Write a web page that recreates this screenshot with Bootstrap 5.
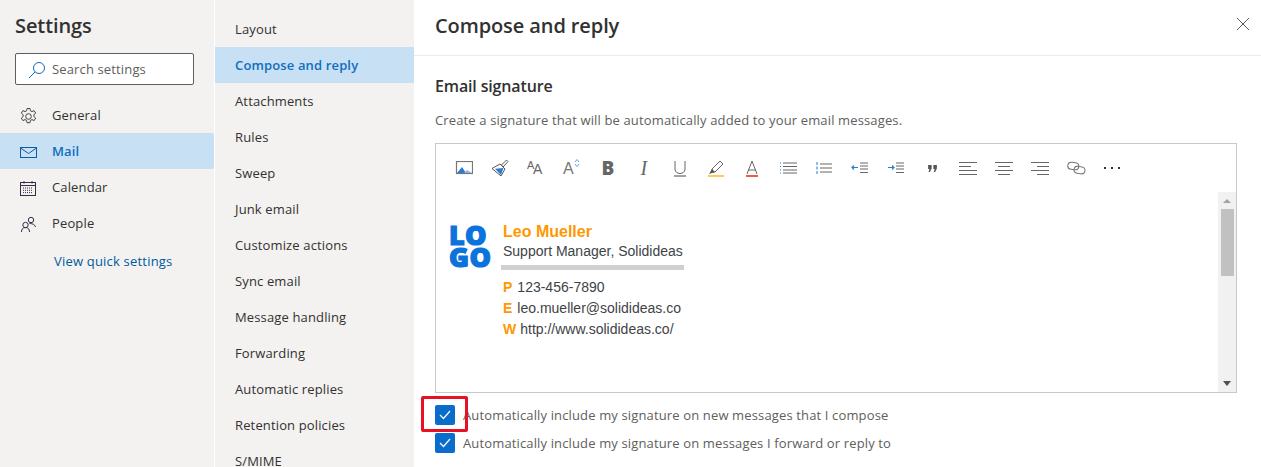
<!DOCTYPE html>
<html>
<head>
  <title>Settings</title>
  <link rel="stylesheet" href="https://cdn.jsdelivr.net/npm/bootstrap@5.3.0/dist/css/bootstrap.min.css">
  <style>
    html, body { height: 467px; overflow: hidden; }
    body { font-family: "Open Sans", "Noto Sans", sans-serif; font-size: 13px; letter-spacing: .14px; color: #323130; background: #fff; position: relative; }
    .shell { height: 467px; }
    .side-main { width: 214px; background: #f3f2f1; flex: none; }
    .side-sub { width: 199px; margin-left: 1px; background: #f3f2f1; flex: none; padding-top: 11px; overflow: hidden; }
    .set-title { font-size: 20px; font-weight: 600; line-height: 26px; padding: 13px 0 0 15px; letter-spacing: -.1px; }
    .search-box { width: 179px; height: 32px; margin: 14px 0 12px 15px; background: #fff; border: 1px solid #605e5c; border-radius: 2px; color: #605e5c; padding: 2px 0 0 11px; gap: 5px; }
    .nav-row { height: 36px; padding: 2px 0 0 19px; gap: 14px; }
    .nav-row.on { background: #c7e0f4; color: #106ebe; font-weight: 600; border-radius: 0 2px 2px 0; }
    .quick-link { color: #005a9e; padding: 10px 0 0 54px; line-height: 20px; letter-spacing: .2px; }
    .sub-row { height: 36px; padding: 2px 0 0 20px; }
    .sub-row.on { background: #c7e0f4; color: #106ebe; font-weight: 600; }
    .pane { min-width: 0; }
    .pane-head { height: 56px; border-bottom: 1px solid #edebe9; padding: 0 11px 4px 21px; }
    .pane-title { font-size: 20px; font-weight: 600; letter-spacing: -.1px; margin: 0; color: #323130; }
    .pane-body { padding: 20px 24px 0 21px; }
    .sec-title { font-size: 16px; font-weight: 600; line-height: 21px; margin: 0; letter-spacing: -.15px; }
    .sec-note { color: #605e5c; line-height: 18px; margin: 14px 0 14px; }
    .editor-box { height: 250px; width: 802px; border: 1px solid #c8c8c8; }
    .tool-row { height: 48px; padding-left: 10px; }
    .tool-btn { width: 36px; height: 48px; flex: none; }
    .edit-area { height: 200px; }
    .edit-scroll { width: 18px; background: #f1f1f1; flex: none; }
    .scroll-thumb { height: 67px; width: 13px; background: #c1c1c1; margin: 0 auto; }
    .scroll-end { height: 17px; }
    .sig-wrap { padding: 29px 0 0 13px; gap: 11px; letter-spacing: 0; }
    .logo-mark { font-weight: 800; font-size: 27px; line-height: 21.5px; color: #0a73dc; -webkit-text-stroke: 1.2px #0a73dc; width: 43px; margin-top: 3px; letter-spacing: .4px; }
    .sig-text { font-family: "Liberation Sans", Arial, sans-serif; font-size: 14px; color: #404347; }
    .sig-name { font-size: 16px; font-weight: 700; color: #ff9800; line-height: 21px; }
    .sig-role { line-height: 19px; }
    .sig-rule { height: 5px; width: 183px; background: #d0d0d0; margin: 4px 0 7px -2px; }
    .sig-line { line-height: 21px; }
    .sig-key { font-weight: 700; color: #ff9800; margin-right: 5px; }
    .sig-key.wide { margin-right: 4px; }
    .check-row { height: 28px; gap: 8px; }
    .check-label { padding-top: 2px; }
    .check-square { width: 20px; height: 20px; background: #0a6ccb; border-radius: 2px; flex: none; }
    .check-rows { margin-top: 8px; color: #605e5c; }
    .red-mark { position: absolute; left: 421px; top: 396px; width: 47px; height: 36px; border: 3px solid #e81123; border-radius: 2px; }
    .close-x { width: 14px; height: 14px; margin-bottom: 4px; }
    .glyph-bold { font-weight: 800; font-size: 19px; color: #666; line-height: 1; }
    .glyph-ital { font-family: "Liberation Serif", serif; font-style: italic; font-size: 20px; color: #666; line-height: 1; }
  </style>
</head>
<body>
  <div class="shell d-flex">
    <div class="side-main">
      <div class="set-title">Settings</div>
      <div class="search-box d-flex align-items-center">
        <svg width="20" height="18" viewBox="0 0 20 18" fill="none" stroke="#0f6cbd" stroke-width="1"><circle cx="12" cy="7" r="5.5"/><path d="M8 11 2 17"/></svg>
        <span>Search settings</span>
      </div>
      <div class="nav-row d-flex align-items-center">
        <svg width="19" height="19" viewBox="0 0 19 19" fill="none" stroke="#484644"><circle cx="9.5" cy="9.5" r="2.8"/><path d="M8 1.5h3l.4 2.3 1.6.8 2.1-1 1.600 2.500-1.800 1.500v2l1.800 1.500-1.600 2.500-2.100-1-1.600.8-.4 2.300H8l-.4-2.300-1.600-.8-2.100 1-1.600-2.500 1.800-1.500v-2L2.300 6.100l1.600-2.500 2.100 1 1.600-.8z"/></svg>
        <span>General</span>
      </div>
      <div class="nav-row on d-flex align-items-center">
        <svg width="19" height="19" viewBox="0 0 19 19" fill="none" stroke="#0f5aa8"><rect x="1.500" y="4.500" width="16" height="10"/><path d="m1.500 5 8 5.500 8-5.500"/></svg>
        <span>Mail</span>
      </div>
      <div class="nav-row d-flex align-items-center">
        <svg width="19" height="19" viewBox="0 0 19 19" fill="none" stroke="#3b2a4a"><rect x="1.500" y="3.500" width="15" height="13"/><path d="M1.500 6.500h15M5 2v2.500M13 2v2.500"/><path d="M4 9h10M4 11.300h10M4 13.600h10" stroke-dasharray="1 1"/></svg>
        <span>Calendar</span>
      </div>
      <div class="nav-row d-flex align-items-center">
        <svg width="19" height="19" viewBox="0 0 19 19" fill="none" stroke="#3b2a4a"><circle cx="12" cy="5" r="2.700"/><circle cx="6.500" cy="10" r="2.700"/><path d="M2.500 17c0-3 1.500-4.500 4-4.500s4 1.500 4 4.500M10.500 8.500c3 0 5.500 1 6 3.500"/></svg>
        <span>People</span>
      </div>
      <div class="quick-link">View quick settings</div>
    </div>

    <div class="side-sub">
      <div class="sub-row d-flex align-items-center">Layout</div>
      <div class="sub-row on d-flex align-items-center">Compose and reply</div>
      <div class="sub-row d-flex align-items-center">Attachments</div>
      <div class="sub-row d-flex align-items-center">Rules</div>
      <div class="sub-row d-flex align-items-center">Sweep</div>
      <div class="sub-row d-flex align-items-center">Junk email</div>
      <div class="sub-row d-flex align-items-center">Customize actions</div>
      <div class="sub-row d-flex align-items-center">Sync email</div>
      <div class="sub-row d-flex align-items-center">Message handling</div>
      <div class="sub-row d-flex align-items-center">Forwarding</div>
      <div class="sub-row d-flex align-items-center">Automatic replies</div>
      <div class="sub-row d-flex align-items-center">Retention policies</div>
      <div class="sub-row d-flex align-items-center">S/MIME</div>
    </div>

    <div class="pane flex-grow-1">
      <div class="pane-head d-flex align-items-center justify-content-between">
        <h1 class="pane-title">Compose and reply</h1>
        <svg class="close-x" viewBox="0 0 14 14" fill="none" stroke="#605e5c"><path d="m1 1 12 12M13 1 1 13"/></svg>
      </div>
      <div class="pane-body">
        <h2 class="sec-title">Email signature</h2>
        <p class="sec-note">Create a signature that will be automatically added to your email messages.</p>
        <div class="editor-box">
          <div class="tool-row d-flex align-items-center">
            <div class="tool-btn d-flex align-items-center justify-content-center"><svg width="18" height="14" viewBox="-1 0 18 14"><rect x=".5" y=".5" width="16" height="12" fill="none" stroke="#777" stroke-width="1.200"/><path d="m1 12 5-6 4 6z" fill="#2b7cd3"/><path d="m8 12 3-3 5 3z" fill="#8ab4e8"/></svg></div>
            <div class="tool-btn d-flex align-items-center justify-content-center"><svg width="18" height="18" viewBox="0 0 18 18"><path d="M1 9.500 9 5l5 5-4 7z" fill="#fff" stroke="#555"/><path d="m4 9.800 8.500-.8L10 16z" fill="#2b7cd3"/><path d="m10.500 6 5-5 1.500 1.500-5 5.500z" fill="none" stroke="#555"/></svg></div>
            <div class="tool-btn d-flex align-items-center justify-content-center"><svg width="18" height="20" viewBox="0 0 18 20"><text x="0" y="11" font-family="Liberation Sans" font-size="11" fill="#666">A</text><text x="6" y="16" font-family="Liberation Sans" font-size="14" fill="#666">A</text></svg></div>
            <div class="tool-btn d-flex align-items-center justify-content-center"><svg width="18" height="22" viewBox="0 0 18 22"><text x="0" y="17" font-family="Liberation Sans" font-size="16" fill="#777">A</text><path d="m12 5 2-2.500 2 2.500M12 7l2 2.500 2-2.500" fill="none" stroke="#6aa5e8"/></svg></div>
            <div class="tool-btn d-flex align-items-center justify-content-center"><span class="glyph-bold">B</span></div>
            <div class="tool-btn d-flex align-items-center justify-content-center"><span class="glyph-ital">I</span></div>
            <div class="tool-btn d-flex align-items-center justify-content-center"><svg width="14" height="17" viewBox="0 0 14 17" fill="none" stroke="#666"><path d="M2 1v8c0 6 10 6 10 0V1"/><path d="M1 16h12" stroke-width="1.200"/></svg></div>
            <div class="tool-btn d-flex align-items-center justify-content-center"><svg width="17" height="17" viewBox="0 0 17 17"><path d="m4 9 8-8 3 3-8 8H4z" fill="none" stroke="#666"/><path d="m1 14 3-5 3 3z" fill="#555"/><path d="M0 16h16" stroke="#ffb900" stroke-width="1.400"/></svg></div>
            <div class="tool-btn d-flex align-items-center justify-content-center"><svg width="14" height="17" viewBox="0 0 14 17"><path d="m2 14 5-13 5 13M3.500 10h7" fill="none" stroke="#666"/><path d="M1 16h12" stroke="#d81e06" stroke-width="1.400"/></svg></div>
            <div class="tool-btn d-flex align-items-center justify-content-center"><svg width="18" height="12" viewBox="0 0 18 12"><path d="M4 1h14M4 4.500h14M4 8h14M4 11h14" stroke="#666"/><path d="M1 1h1M1 4.500h1M1 8h1M1 11h1" stroke="#2b7cd3"/></svg></div>
            <div class="tool-btn d-flex align-items-center justify-content-center"><svg width="17" height="12" viewBox="0 0 17 12"><path d="M4 2h12M4 6h12M4 10h12" stroke="#666"/><path d="M1 0v3M1 4.500v3M1 9v3" stroke="#6aa5e8" stroke-width="1.500"/></svg></div>
            <div class="tool-btn d-flex align-items-center justify-content-center"><svg width="18" height="12" viewBox="0 0 18 12" fill="none"><path d="M9 1h8M9 4h8M9 7h8M9 10.500h8" stroke="#666"/><path d="M7 5.500H1m2-2-2 2 2 2" stroke="#2b7cd3" stroke-width="1.200"/></svg></div>
            <div class="tool-btn d-flex align-items-center justify-content-center"><svg width="18" height="12" viewBox="0 0 18 12" fill="none"><path d="M9 1h8M9 4h8M9 7h8M9 10.500h8" stroke="#666"/><path d="M1 5.500h6m-2-2 2 2-2 2" stroke="#2b7cd3" stroke-width="1.200"/></svg></div>
            <div class="tool-btn d-flex align-items-center justify-content-center"><svg width="9" height="7" viewBox="0 0 10 8"><path d="M0 0h4v4L2 8H.5l1-3.500H0zM6 0h4v4L8 8H6.500l1-3.500H6z" fill="#555"/></svg></div>
            <div class="tool-btn d-flex align-items-center justify-content-center"><svg width="18" height="13" viewBox="0 0 18 13"><path d="M0 .500h18M0 4.500h12M0 8.500h18M0 12.500h18" stroke="#666"/></svg></div>
            <div class="tool-btn d-flex align-items-center justify-content-center"><svg width="18" height="13" viewBox="0 0 18 13"><path d="M0 .500h18M3 4.500h12M0 8.500h18M3 12.500h12" stroke="#666"/></svg></div>
            <div class="tool-btn d-flex align-items-center justify-content-center"><svg width="18" height="13" viewBox="0 0 18 13"><path d="M0 .500h18M6 4.500h12M0 8.500h18M6 12.500h12" stroke="#666"/></svg></div>
            <div class="tool-btn d-flex align-items-center justify-content-center"><svg width="19" height="14" viewBox="0 0 19 14" fill="none" stroke="#777"><rect x=".8" y="1.500" width="11" height="7" rx="3.500" transform="rotate(8 6 5)"/><rect x="7" y="5.500" width="11" height="7" rx="3.500" transform="rotate(8 12 9)"/></svg></div>
            <div class="tool-btn d-flex align-items-center justify-content-center"><svg width="16" height="3" viewBox="0 0 16 3"><path d="M0 0h2v2H0zM7 0h2v2H7zM14 0h2v2h-2z" fill="#333"/></svg></div>
          </div>
          <div class="edit-area d-flex">
            <div class="flex-grow-1">
              <div class="sig-wrap d-flex">
                <div class="logo-mark">LO<br>GO</div>
                <div class="sig-text">
                  <div class="sig-name">Leo Mueller</div>
                  <div class="sig-role">Support Manager, Solidideas</div>
                  <div class="sig-rule"></div>
                  <div class="sig-line"><span class="sig-key">P</span>123-456-7890</div>
                  <div class="sig-line"><span class="sig-key">E</span>leo.mueller@solidideas.co</div>
                  <div class="sig-line"><span class="sig-key wide">W</span>http://www.solidideas.co/</div>
                </div>
              </div>
            </div>
            <div class="edit-scroll d-flex flex-column">
              <div class="scroll-end d-flex align-items-center justify-content-center"><svg width="8" height="4" viewBox="0 0 8 4"><path d="M4 0l4 4H0z" fill="#a3a3a3"/></svg></div>
              <div class="scroll-thumb"></div>
              <div class="flex-grow-1"></div>
              <div class="scroll-end d-flex align-items-center justify-content-center"><svg width="8" height="5" viewBox="0 0 8 5"><path d="M0 0h8L4 5z" fill="#505050"/></svg></div>
            </div>
          </div>
        </div>
        <div class="check-rows">
          <div class="check-row d-flex align-items-center">
            <div class="check-square d-flex align-items-center justify-content-center"><svg width="12" height="10" viewBox="0 0 12 10" fill="none" stroke="#fff" stroke-width="1.200"><path d="m1 5 3.500 3.500L11 1"/></svg></div>
            <span class="check-label">Automatically include my signature on new messages that I compose</span>
          </div>
          <div class="check-row d-flex align-items-center">
            <div class="check-square d-flex align-items-center justify-content-center"><svg width="12" height="10" viewBox="0 0 12 10" fill="none" stroke="#fff" stroke-width="1.200"><path d="m1 5 3.500 3.500L11 1"/></svg></div>
            <span class="check-label">Automatically include my signature on messages I forward or reply to</span>
          </div>
        </div>
      </div>
    </div>
  </div>
  <div class="red-mark"></div>
</body>
</html>
